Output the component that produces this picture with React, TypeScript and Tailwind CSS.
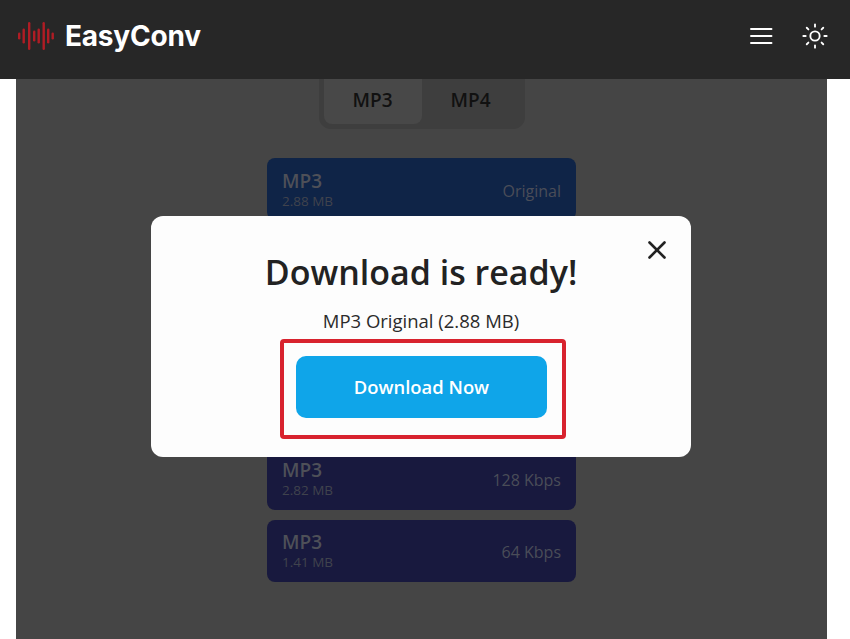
import { Sun, X } from 'lucide-react';

const rows = [
  { size: '2.88 MB', label: 'Original', tone: 'bg-[#0f2447]' },
  { size: '', label: '', tone: 'bg-[#18193e]' },
  { size: '', label: '', tone: 'bg-[#18193e]' },
  { size: '', label: '', tone: 'bg-[#18193e]' },
  { size: '2.82 MB', label: '128 Kbps', tone: 'bg-[#18193e]' },
  { size: '1.41 MB', label: '64 Kbps', tone: 'bg-[#18193e]' },
];

const bars = [
  { x: 1, h: 7 },
  { x: 5.5, h: 15 },
  { x: 11, h: 28 },
  { x: 16, h: 11 },
  { x: 20.5, h: 15 },
  { x: 25.5, h: 28 },
  { x: 30, h: 15 },
  { x: 34.5, h: 7 },
];

function Logo() {
  return (
    <svg width="37" height="30" viewBox="0 0 37 30" className="text-[#b01c24]">
      {bars.map((b) => (
        <rect key={b.x} x={b.x} y={15 - b.h / 2} width="2.4" height={b.h} rx="1.2" fill="currentColor" />
      ))}
    </svg>
  );
}

function Burger() {
  return (
    <svg width="24" height="18" viewBox="0 0 24 18" stroke="currentColor" strokeWidth="1.9" strokeLinecap="round">
      <path d="M2 2h20.5M2 9h20.5M2 16h20.5" />
    </svg>
  );
}

export default function App() {
  return (
    <div className="relative flex h-[639px] w-[850px] flex-col overflow-hidden bg-white font-['Open_Sans','Noto_Sans',sans-serif]">
      {/* Header */}
      <header className="flex h-[79px] shrink-0 items-center justify-between bg-[#272727] pb-[7px] pl-[17px] pr-[21px]">
        <div className="flex items-center gap-[11px]">
          <Logo />
          <span className="font-['Inter',sans-serif] text-[28px] font-bold tracking-[-0.2px] text-white">EasyConv</span>
        </div>
        <div className="flex items-center gap-[28px] text-white">
          <Burger />
          <Sun className="h-[28px] w-[28px]" strokeWidth={1.6} />
        </div>
      </header>

      {/* Dimmed page */}
      <main className="mx-4 flex w-[811px] flex-1 flex-col items-center bg-[#454545]">
        <div className="flex h-[50px] w-[206px] rounded-b-xl bg-[#3e3e3e] px-[5px] pb-[5px]">
          <div className="flex w-[98px] items-center justify-center rounded-b-lg bg-[#484848] pb-[3px] text-[19px] font-semibold text-[#111111]">MP3</div>
          <div className="flex flex-1 items-center justify-center pb-[3px] text-[19px] font-semibold text-[#111111]">MP4</div>
        </div>

        <div className="mt-[29px] flex w-[309px] flex-col gap-[10.4px]">
          {rows.map((row, i) => (
            <div key={i} className={`flex h-[62px] items-center justify-between rounded-lg px-[15px] ${row.tone}`}>
              {row.label && (
                <>
                  <div className="flex flex-col gap-[2px] pt-[2px]">
                    <div className="text-[19px] font-semibold leading-[20px] text-[#4e5058]">MP3</div>
                    <div className="text-[13.5px] leading-[17px] text-[#40434d]">{row.size}</div>
                  </div>
                  <span className="pt-[3px] text-[16px] text-[#4a4d58]">{row.label}</span>
                </>
              )}
            </div>
          ))}
        </div>
      </main>

      {/* Modal */}
      <div className="absolute left-[151px] top-[216px] flex h-[241px] w-[540px] flex-col items-center rounded-xl bg-[#fdfdfd] pt-[30px]">
        <X className="absolute right-[19px] top-[19px] h-[30px] w-[30px] text-[#222222]" strokeWidth={2.1} />
        <h2 className="text-[34px] font-semibold leading-[52px] text-[#222222]">Download is ready!</h2>
        <p className="mt-[11px] text-[18.5px] leading-[24px] text-[#2b2b2b]">MP3 Original (2.88 MB)</p>
        <div className="ml-[4px] mt-[6px] rounded-sm border-[4px] border-[#d8232e] pb-[17px] pl-[12px] pr-[15px] pt-[13px]">
          <button className="block h-[62px] w-[251px] rounded-[10px] bg-[#0fa5e9] text-[18.4px] font-semibold text-white">Download Now</button>
        </div>
      </div>
    </div>
  );
}
